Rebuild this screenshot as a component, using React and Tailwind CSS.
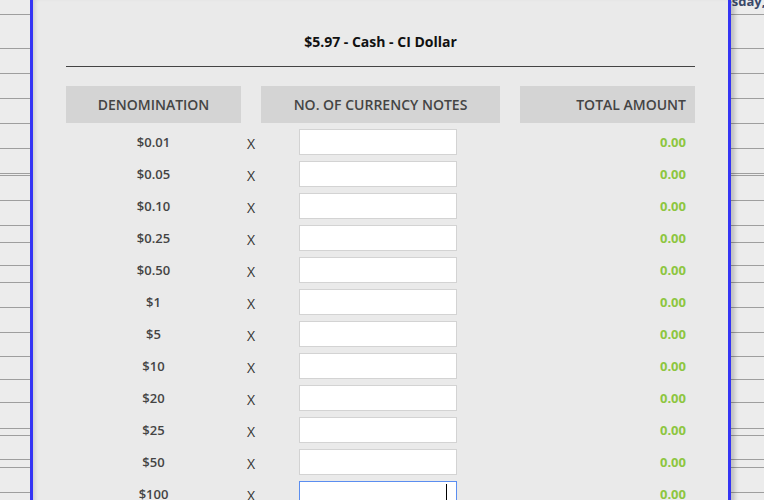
import { useState } from 'react';

const bgRows = [
  'h-[15px]', 'h-[34px]', 'h-[25px]', 'h-[25px]', 'h-[25px]', 'h-[25px]', 'h-[25px]',
  'h-[2px]', 'h-[25px]', 'h-[25px]', 'h-[17px]', 'h-[23px]', 'h-[17px]', 'h-[25px]',
  'h-[25px]', 'h-[24px]', 'h-[23px]', 'h-[23px]', 'h-[26px]', 'h-[7px]', 'h-[24px]',
  'h-[8px]', 'h-[25px]',
];

const denominations = ['$0.01', '$0.05', '$0.10', '$0.25', '$0.50', '$1', '$5', '$10', '$20', '$25', '$50', '$100'];

export default function App() {
  const [counts, setCounts] = useState({});

  return (
    <div className="relative h-[500px] w-[764px] overflow-hidden bg-[#ececec] font-['Open_Sans',sans-serif]">
      {/* Calendar behind the dialog */}
      <div className="flex flex-col">
        {bgRows.map((h, idx) => (
          <div key={idx} className={`${h} shrink-0 border-b border-[#9e9e9e] overflow-hidden`}>
            {idx === 0 && (
              <div className="pl-[687px] -mt-[5px] whitespace-nowrap text-[13px] font-bold leading-none text-[#3a4868]">
                Wednesday, 14
              </div>
            )}
          </div>
        ))}
      </div>

      {/* Cash count dialog */}
      <div className="absolute left-[30px] top-0 h-[560px] w-[701px] border-x-[3px] border-[#3434f4] bg-[#eaeaea] px-[33px] pt-8 shadow-[4px_0_4px_rgba(0,0,0,0.18),inset_4px_0_4px_-2px_rgba(0,0,0,0.12)]">
        <div className="border-b border-[#444] pb-[14px] text-center text-[14px] font-bold leading-5 text-[#111]">
          $5.97 - Cash - CI Dollar
        </div>

        <div className="mt-[19px] grid grid-cols-[175px_20px_239px_20px_175px] text-[14px] font-semibold text-[#444]">
          <div className="flex h-[37px] items-center justify-center bg-[#d4d4d4]">DENOMINATION</div>
          <div />
          <div className="flex h-[37px] items-center justify-center bg-[#d4d4d4]">NO. OF CURRENCY NOTES</div>
          <div />
          <div className="flex h-[37px] items-center justify-end bg-[#d4d4d4] pr-[9px]">TOTAL AMOUNT</div>
        </div>

        <div className="mt-[3px] flex flex-col">
          {denominations.map((d, idx) => {
            const last = idx === denominations.length - 1;
            return (
              <div key={d} className="grid h-8 grid-cols-[175px_20px_239px_20px_175px] items-center">
                <div className="pt-[2px] text-center text-[13px] font-semibold text-[#444]">{d}</div>
                <div className="pt-[2px] text-center text-[14px] text-[#333]">X</div>
                <div className="relative ml-[38px] w-[158px]">
                  <input
                    type="text"
                    value={counts[d] || ''}
                    onChange={(e) => setCounts({ ...counts, [d]: e.target.value })}
                    className={`block h-[26px] w-full border bg-white px-2 text-right text-[13px] outline-none ${
                      last ? 'border-[#5b8ef0]' : 'border-[#d3d3d3]'
                    }`}
                  />
                  {last && <span className="absolute right-[10px] top-[3px] h-[19px] w-px bg-black" />}
                </div>
                <div />
                <div className="pt-[2px] pr-[9px] text-right text-[13px] font-bold text-[#8dc63f]">0.00</div>
              </div>
            );
          })}
        </div>
      </div>
    </div>
  );
}
